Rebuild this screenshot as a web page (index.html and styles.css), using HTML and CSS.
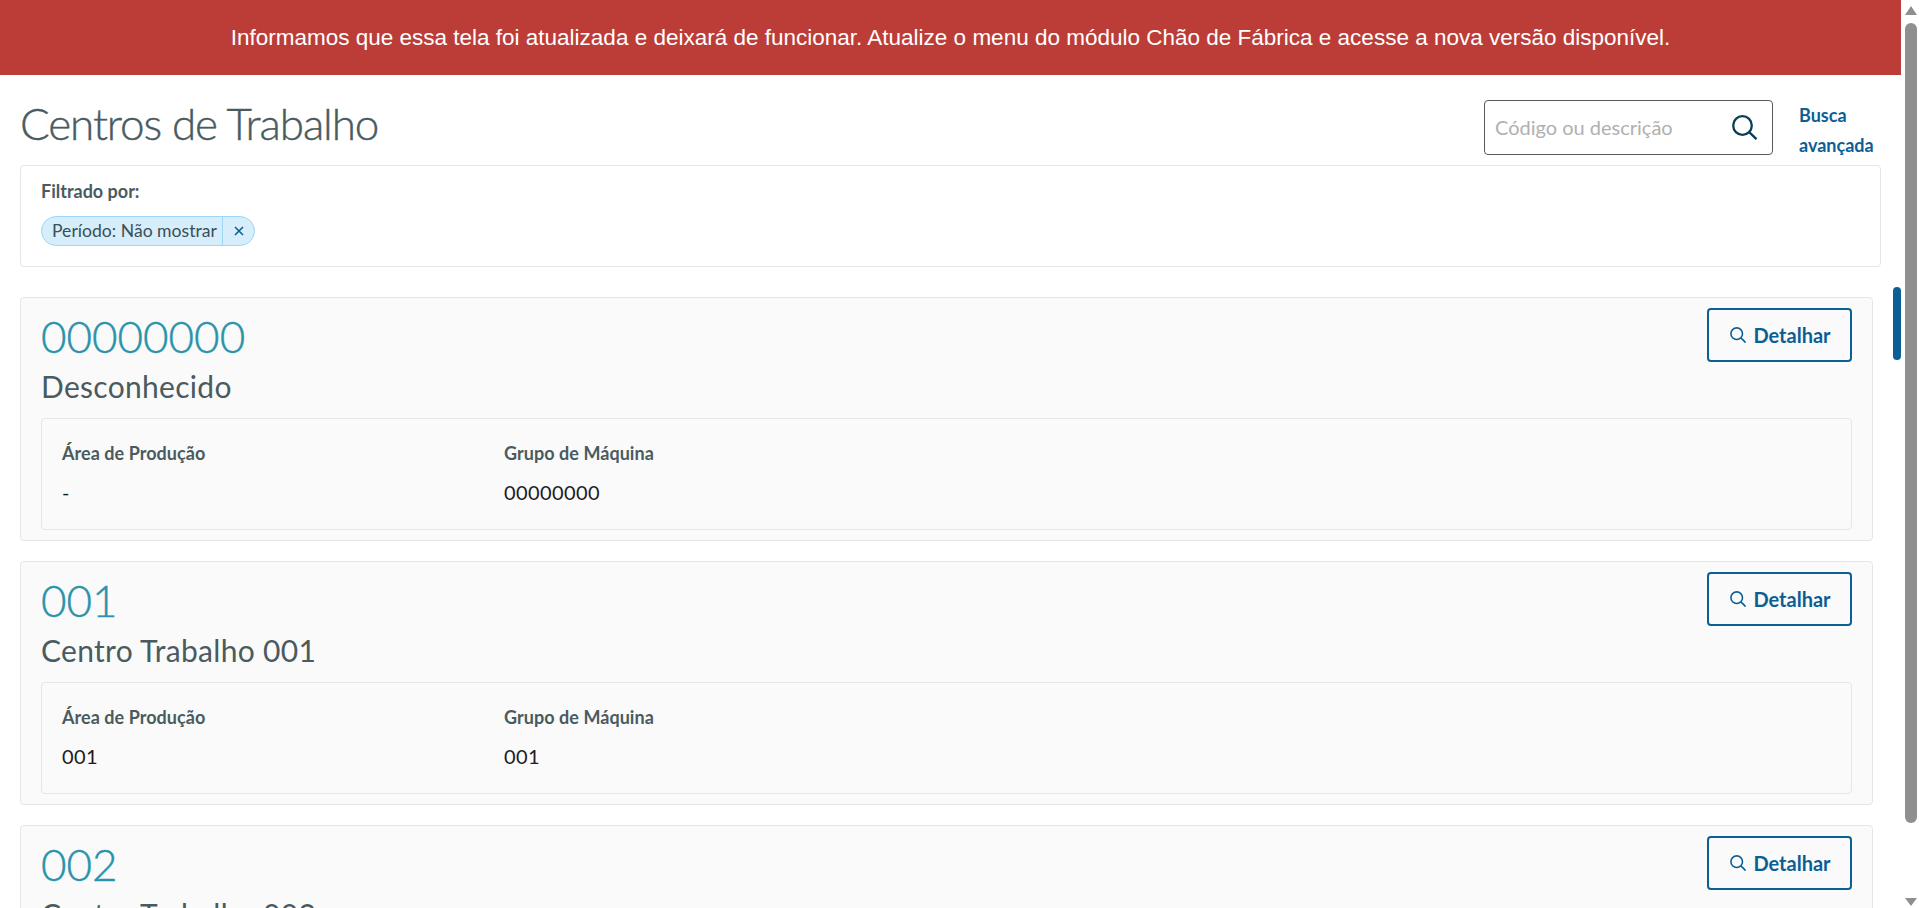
FILE: index.html
```html
<!DOCTYPE html>
<html lang="pt-BR">
<head>
<meta charset="utf-8">
<title>Centros de Trabalho</title>
<link rel="stylesheet" href="styles.css">
</head>
<body>
<div class="page">
  <div class="banner">Informamos que essa tela foi atualizada e deixará de funcionar. Atualize o menu do módulo Chão de Fábrica e acesse a nova versão disponível.</div>
  <header class="header">
    <h1 class="title">Centros de Trabalho</h1>
    <div class="search-area">
      <div class="search">
        <span class="placeholder">Código ou descrição</span>
        <svg class="search-icon" viewBox="0 0 25 25" width="25" height="25"><circle cx="10.5" cy="10.5" r="9.3"/><path d="M17.2 17.2 24.5 24.2"/></svg>
      </div>
      <a class="advanced">Busca avançada</a>
    </div>
  </header>
  <section class="filters">
    <div class="filters-label">Filtrado por:</div>
    <div class="chip">
      <span class="chip-text">Período: Não mostrar</span>
      <span class="chip-close"><svg viewBox="0 0 10 10" width="10" height="10"><path d="M1 1 9 9M9 1 1 9"/></svg></span>
    </div>
  </section>
  <section class="card">
    <div class="card-head">
      <div>
        <div class="code">00000000</div>
        <div class="name">Desconhecido</div>
      </div>
      <button class="detail"><svg viewBox="0 0 16 16" width="16" height="16"><circle cx="6.7" cy="6.7" r="5.8"/><path d="M10.9 10.9 15.6 15.6"/></svg>Detalhar</button>
    </div>
    <div class="info">
      <div class="info-col"><div class="info-label">Área de Produção</div><div class="info-value">-</div></div>
      <div class="info-col"><div class="info-label">Grupo de Máquina</div><div class="info-value">00000000</div></div>
    </div>
  </section>
  <section class="card">
    <div class="card-head">
      <div>
        <div class="code">001</div>
        <div class="name">Centro Trabalho 001</div>
      </div>
      <button class="detail"><svg viewBox="0 0 16 16" width="16" height="16"><circle cx="6.7" cy="6.7" r="5.8"/><path d="M10.9 10.9 15.6 15.6"/></svg>Detalhar</button>
    </div>
    <div class="info">
      <div class="info-col"><div class="info-label">Área de Produção</div><div class="info-value">001</div></div>
      <div class="info-col"><div class="info-label">Grupo de Máquina</div><div class="info-value">001</div></div>
    </div>
  </section>
  <section class="card">
    <div class="card-head">
      <div>
        <div class="code">002</div>
        <div class="name">Centro Trabalho 002</div>
      </div>
      <button class="detail"><svg viewBox="0 0 16 16" width="16" height="16"><circle cx="6.7" cy="6.7" r="5.8"/><path d="M10.9 10.9 15.6 15.6"/></svg>Detalhar</button>
    </div>
  </section>
  <div class="inner-thumb"></div>
</div>
<aside class="scrollbar">
  <span class="arrow-up"></span>
  <span class="thumb"></span>
  <span class="arrow-down"></span>
</aside>
</body>
</html>
```
FILE: styles.css
```css
* { box-sizing: border-box; }
html, body { height: 100%; margin: 0; }
body {
  display: flex;
  overflow: hidden;
  background: #fff;
  font-family: "Lato", "Open Sans", sans-serif;
  color: #4a5b5f;
}
.page { position: relative; flex: 1; min-width: 0; height: 908px; overflow: hidden; }
.banner {
  height: 75px;
  display: flex;
  align-items: center;
  justify-content: center;
  background: #bc3d38;
  color: #fff;
  font-family: "Liberation Sans", Arial, sans-serif;
  font-size: 22.5px;
}
.header {
  display: flex;
  justify-content: space-between;
  align-items: flex-start;
  height: 90px;
  padding: 25px 25px 0 20px;
}
.title {
  margin: 0;
  font-size: 44px;
  line-height: 46px;
  font-weight: 300;
  letter-spacing: -1.1px;
  -webkit-text-stroke: 0.4px #4a5b5f;
  color: #4a5b5f;
}
.search-area { display: flex; gap: 26px; }
.search {
  display: flex;
  align-items: center;
  justify-content: space-between;
  width: 289px;
  height: 55px;
  padding: 0 15px 0 10px;
  border: 1px solid #58595b;
  border-radius: 4px;
}
.placeholder { padding-bottom: 2px; font-size: 20px; color: #b0b0b0; }
.search-icon { fill: none; stroke: #0b3c5a; stroke-width: 2.3; }
.advanced {
  width: 77px;
  font-size: 18px;
  font-weight: 700;
  line-height: 30px;
  color: #0c5f95;
}
.filters {
  height: 102px;
  margin: 0 20px 30px;
  padding: 13px 20px 0;
  border: 1px solid #e6e6e6;
  border-radius: 4px;
}
.filters-label { font-size: 18px; font-weight: 700; line-height: 24px; }
.chip {
  display: inline-flex;
  align-items: stretch;
  height: 30px;
  margin-top: 13px;
  border: 1px solid #9fd6f5;
  border-radius: 15px;
  background: #d6eefb;
  color: #3a4f57;
}
.chip-text { padding: 0 5px 0 10px; font-size: 17.6px; line-height: 28px; }
.chip-close {
  display: flex;
  align-items: center;
  justify-content: center;
  width: 32px;
  padding-left: 2px;
  border-left: 1px solid #9fd6f5;
}
.chip-close svg { fill: none; stroke: #0c5f95; stroke-width: 1.6; }
.card {
  height: 244px;
  margin: 0 28px 20px 20px;
  padding: 10px 20px 0;
  border: 1px solid #e6e6e6;
  border-radius: 4px;
  background: #fafafa;
}
.card-head { display: flex; justify-content: space-between; align-items: flex-start; }
.code {
  font-size: 44px;
  line-height: 56px;
  font-weight: 300;
  -webkit-text-stroke: 0.4px #2a93ab;
  color: #2a93ab;
}
.name { margin-top: 2px; font-size: 30px; line-height: 40px; font-weight: 400; letter-spacing: 0.3px; color: #4a5b5f; }
.detail {
  display: flex;
  align-items: center;
  justify-content: center;
  gap: 7px;
  width: 145px;
  height: 54px;
  padding: 0 0 0 2px;
  border: 2px solid #0c5f95;
  border-radius: 4px;
  background: transparent;
  color: #0c5f95;
  font-family: inherit;
  font-size: 20px;
  font-weight: 700;
}
.detail svg { fill: none; stroke: #0c5f95; stroke-width: 1.6; }
.info {
  display: grid;
  grid-template-columns: 442px 1fr;
  height: 112px;
  margin-top: 12px;
  padding: 22px 20px;
  border: 1px solid #e6e6e6;
  border-radius: 4px;
}
.info-label { font-size: 18px; font-weight: 700; line-height: 24px; letter-spacing: 0.05px; }
.info-value { margin-top: 15px; font-size: 20px; line-height: 24px; letter-spacing: 0.4px; color: #1c1c1c; }
.inner-thumb {
  position: absolute;
  top: 287px;
  right: 0;
  width: 8px;
  height: 73px;
  border-radius: 4px;
  background: #0a5f94;
}
.scrollbar {
  flex: 0 0 18px;
  display: flex;
  flex-direction: column;
  align-items: center;
  padding: 6px 2px 2px 4px;
  background: #fff;
}
.arrow-up {
  flex: none;
  border-left: 6px solid transparent;
  border-right: 6px solid transparent;
  border-bottom: 9px solid #8f8f8f;
}
.thumb {
  flex: none;
  width: 12px;
  height: 800px;
  margin: 8px 0 auto;
  border-radius: 6px;
  background: #8f8f8f;
}
.arrow-down {
  flex: none;
  border-left: 6px solid transparent;
  border-right: 6px solid transparent;
  border-top: 8px solid #8f8f8f;
}
```
